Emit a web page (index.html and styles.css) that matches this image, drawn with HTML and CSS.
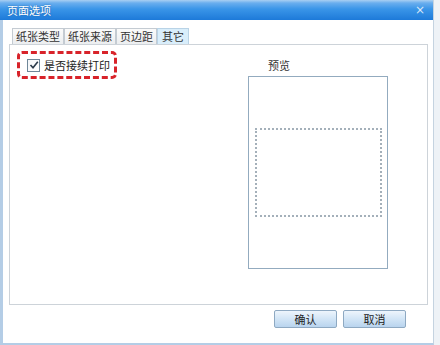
FILE: index.html
```html
<!DOCTYPE html>
<html lang="zh-CN">
<head>
    <meta charset="UTF-8">
    <title>页面选项</title>
    <link rel="stylesheet" href="styles.css">
</head>
<body>
    <div class="window">
        <div class="titlebar">
            <span class="title">页面选项</span>
            <span class="close">&#215;</span>
        </div>

        <div class="content">
            <div class="tabs">
                <div class="tab">纸张类型</div>
                <div class="tab">纸张来源</div>
                <div class="tab">页边距</div>
                <div class="tab active">其它</div>
            </div>

            <div class="panel">
                <div class="options">
                    <label class="highlight">
                        <span class="checkbox">
                            <svg width="10" height="10" viewBox="0 0 10 10">
                                <path d="M1.5 5 L4 7.8 L8.8 1.8" fill="none" stroke="#2a3a4a" stroke-width="1.6"/>
                            </svg>
                        </span>
                        是否接续打印
                    </label>
                </div>

                <div class="preview">
                    <div class="preview-label">预览</div>
                    <div class="preview-page">
                        <div class="preview-area"></div>
                    </div>
                </div>
            </div>

            <div class="buttons">
                <button class="btn">确认</button>
                <button class="btn">取消</button>
            </div>
        </div>
    </div>
</body>
</html>
```

FILE: styles.css
```css
:root {
    --title-top: #a9cff2;
    --title-mid: #3a95e8;
    --title-bottom: #1d7ad9;
    --frame-color: #b4cde6;
    --panel-border: #cdd3d9;
    --text-color: #2b2b2b;
    --dash-color: #d8232a;
    --preview-border: #93abbf;
}

body {
    margin: 0;
    background-color: #eef2f6;
    font-family: 'Noto Sans CJK SC', 'Noto Sans', sans-serif;
    font-size: 11px;
    color: var(--text-color);
}

.window {
    width: 430px;
    height: 343px;
    background-color: #fff;
    border-left: 3px solid var(--frame-color);
    border-right: 1px solid #c5d3e0;
    border-bottom: 2px solid var(--frame-color);
    display: flex;
    flex-direction: column;
}

.titlebar {
    height: 20px;
    margin-left: -3px;
    padding: 0 8px 0 7px;
    display: flex;
    align-items: center;
    justify-content: space-between;
    background: linear-gradient(to bottom, var(--title-top) 0%, #6aaeee 15%, var(--title-mid) 45%, var(--title-bottom) 100%);
    color: #fff;
}

.title {
    font-size: 11px;
    line-height: 14px;
    text-shadow: 0 0 2px #1a5fa8;
}

.close {
    font-family: 'DejaVu Sans', sans-serif;
    font-size: 12px;
    color: #d8e8f8;
}

.content {
    padding: 8px 5px 0 6px;
    display: flex;
    flex-direction: column;
}

.tabs {
    display: flex;
    padding-left: 3px;
}

.tab {
    height: 15px;
    line-height: 15px;
    padding: 0 3px;
    border: 1px solid #c4cbd2;
    border-bottom: none;
    background: linear-gradient(to bottom, #fbfbfb, #eceef0);
    color: #333;
    white-space: nowrap;
}

.tab.active {
    padding: 0 4px;
    background: #d9eefb;
    border-color: #b9d3e6;
}

.panel {
    height: 259px;
    border: 1px solid var(--panel-border);
    display: flex;
    justify-content: space-between;
}

.options {
    padding: 6px 0 0 7px;
}

.highlight {
    width: 87px;
    height: 22px;
    padding-left: 7px;
    border: 3px dashed var(--dash-color);
    border-radius: 5px;
    display: flex;
    align-items: center;
    gap: 4px;
    color: #222;
    white-space: nowrap;
}

.checkbox {
    width: 11px;
    height: 11px;
    flex-shrink: 0;
    border: 1px solid #6f8799;
    background: linear-gradient(to bottom right, #f4f6f8, #fff);
    display: flex;
    align-items: center;
    justify-content: center;
}

.preview {
    width: 140px;
    margin-right: 39px;
    padding-top: 13px;
}

.preview-label {
    line-height: 14px;
    margin-left: 20px;
    color: #333;
}

.preview-page {
    margin-top: 4px;
    border: 1px solid var(--preview-border);
    padding: 51px 0 0 6px;
    box-sizing: border-box;
    height: 193px;
}

.preview-area {
    width: 123px;
    height: 85px;
    border: 2px dotted #a4b0ba;
}

.buttons {
    display: flex;
    justify-content: flex-end;
    gap: 6px;
    margin-top: 5px;
    padding-right: 22px;
}

.btn {
    width: 63px;
    height: 18px;
    padding: 0;
    border: 1px solid #8ea9c2;
    border-radius: 2px;
    background: linear-gradient(to bottom, #eef5fc 0%, #d2e5f6 50%, #b9d4ee 100%);
    font-family: 'Noto Sans CJK SC', sans-serif;
    font-size: 11px;
    line-height: 16px;
    color: #222;
}
```
